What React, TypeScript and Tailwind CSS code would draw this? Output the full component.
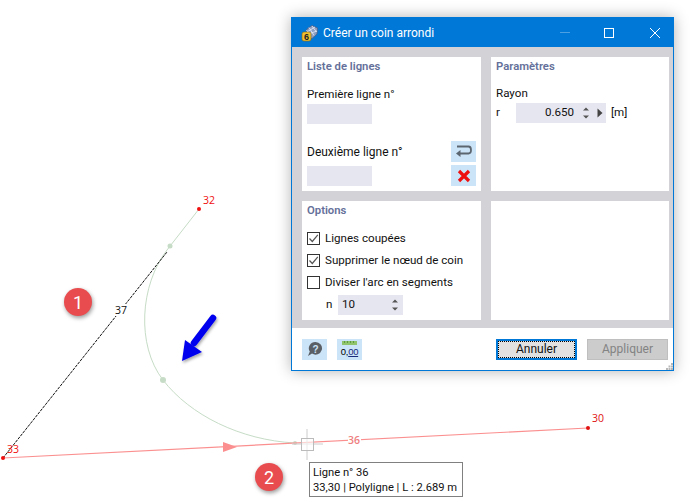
const font = "font-['Roboto','Liberation_Sans',sans-serif]"

function AppIcon() {
  return (
    <svg width="18" height="18" viewBox="0 0 18 18" className="shrink-0">
      <path d="M6 5 L11 1.5 L16.5 4 L16 10 L11 14.5 L5 11 Z" fill="#8c9fc4" stroke="#4f5f86" strokeWidth="0.8" />
      <path d="M8 3.5 L13 11.5 M11 2 L15.5 8 M6 8 L14 3 M6 10.5 L16 7 M5.5 6 L10 14" stroke="#e8ecf5" strokeWidth="0.8" />
      <rect x="1" y="8" width="9" height="9" rx="2" fill="#f0c030" stroke="#8a6a10" strokeWidth="0.6" />
      <text x="5.5" y="15.5" textAnchor="middle" fontSize="9" fontWeight="700" fill="#222" fontFamily="Liberation Sans">6</text>
    </svg>
  )
}

function Spinner() {
  return (
    <svg width="8" height="12" viewBox="0 0 8 12">
      <path d="M4 0.5 L7 3.5 H1 Z M4 11.5 L1 8.5 H7 Z" fill="#555" />
    </svg>
  )
}

function IconButton({ children }: { children: React.ReactNode }) {
  return <div className="w-[25px] h-[21px] bg-[#cce4f7] flex items-center justify-center">{children}</div>
}

function Panel({ title, children }: { title?: string; children?: React.ReactNode }) {
  return (
    <div className="bg-white pl-[5px] pr-[5px] flex flex-col">
      {title && <div className="h-[18px] leading-[20px] text-[11.3px] font-semibold text-[#65709a]">{title}</div>}
      {children}
    </div>
  )
}

function CheckRow({ label, checked }: { label: string; checked?: boolean }) {
  return (
    <div className="h-[22px] flex items-center gap-[5px] whitespace-nowrap">
      <div className="w-[13px] h-[13px] border border-[#333] bg-white flex items-center justify-center shrink-0">
        {checked && (
          <svg width="11" height="11" viewBox="0 0 11 11">
            <path d="M1.5 5.5 L4.3 8.5 L9.8 1.8" fill="none" stroke="#555" strokeWidth="1.2" />
          </svg>
        )}
      </div>
      <span className="pt-px">{label}</span>
    </div>
  )
}

function Drawing() {
  return (
    <svg width="692" height="502" className="absolute inset-0">
      <defs>
        <filter id="soft" x="-30%" y="-30%" width="170%" height="170%">
          <feDropShadow dx="1" dy="2" stdDeviation="1.5" floodColor="#000" floodOpacity="0.35" />
        </filter>
      </defs>
      <path d="M167 250 L199 209" stroke="#c6dcc6" strokeWidth="1" fill="none" />
      <path d="M167 250 C140 285 136 345 163 380 C190 415 240 440 295 443" stroke="#c6dcc6" strokeWidth="1" fill="none" />
      <circle cx="170" cy="246" r="2.5" fill="#c6dcc6" />
      <circle cx="163" cy="380" r="3" fill="#c6dcc6" />
      <circle cx="295" cy="443" r="2" fill="#c6dcc6" />
      <path d="M3 458 L167 252" stroke="#111" strokeWidth="1" strokeDasharray="3 1" fill="none" />
      <path d="M3 458 L588 428" stroke="#fb8f8f" strokeWidth="1.2" fill="none" />
      <path d="M223 442 L237 447 L223 452 Z" fill="#fb8f8f" />
      <circle cx="199" cy="209" r="2" fill="#f01010" />
      <circle cx="3" cy="458" r="2" fill="#f01010" />
      <circle cx="588" cy="428" r="2" fill="#e01010" />
      <path d="M307 429 V460 M292 444 H323" stroke="#ccc" strokeWidth="1" />
      <rect x="301.5" y="438.5" width="12" height="12" fill="white" fillOpacity="0.6" stroke="#bbb" strokeWidth="1" />
      <g className="font-['Open_Sans',sans-serif]" fontSize="10.5">
        <text x="203" y="204" fill="#f01010">32</text>
        <text x="7" y="453" fill="#f01010">33</text>
        <text x="592" y="422" fill="#e01010">30</text>
        <rect x="115" y="304" width="13" height="12" fill="white" />
        <text x="115" y="314" fill="#111">37</text>
        <rect x="348" y="434" width="13" height="12" fill="white" />
        <text x="348" y="444" fill="#ee8080" fontWeight="600">36</text>
      </g>
      <g filter="url(#soft)">
        <path d="M213 318 L194 343" stroke="#0000ee" strokeWidth="6.5" strokeLinecap="round" />
        <path d="M182 361 L185 340 L202 352 Z" fill="#0000ee" />
      </g>
    </svg>
  )
}

function Badge({ n, className }: { n: string; className: string }) {
  return (
    <div className={`absolute w-[28px] h-[28px] rounded-full bg-[#e84c4f] text-white text-[18px] flex items-center justify-center shadow-[1px_2px_4px_rgba(0,0,0,0.4)] ${className}`}>
      {n}
    </div>
  )
}

export default function App() {
  return (
    <div className={`relative w-[692px] h-[502px] bg-white overflow-hidden text-[11.6px] text-[#111] ${font}`}>
      <Drawing />
      <Badge n="1" className="left-[64px] top-[288px]" />
      <Badge n="2" className="left-[255px] top-[463px]" />

      {/* hover tooltip */}
      <div className="absolute left-[309px] top-[462px] w-[154px] h-[35px] border border-[#808080] bg-white pl-[3px] text-[11.2px] leading-[15px] flex flex-col justify-center whitespace-nowrap">
        <div>Ligne n° 36</div>
        <div>33,30 | Polyligne | L : 2.689 m</div>
      </div>

      {/* dialog window */}
      <div className="absolute left-[291px] top-[17px] w-[383px] h-[354px] border border-[#0078d7] bg-white flex flex-col shadow-[0_0_14px_rgba(0,0,0,0.3)]">
        <div className="h-[29px] bg-[#0078d7] text-white flex items-center pl-[9px] shrink-0">
          <AppIcon />
          <span className="ml-[4px] text-[12px]">Créer un coin arrondi</span>
          <div className="ml-auto flex items-center">
            <div className="w-[10px] h-px bg-[#4da1e3] mr-[34px]" />
            <div className="w-[10px] h-[10px] border border-white mr-[36px]" />
            <svg width="10" height="10" viewBox="0 0 10 10" className="mr-[13px]">
              <path d="M0 0 L10 10 M10 0 L0 10" stroke="white" strokeWidth="1" />
            </svg>
          </div>
        </div>

        <div className="bg-[#d3d3d7] pl-[10px] pr-[4px] pt-[10px] pb-[8px] grid grid-cols-[179px_178px] grid-rows-[134px_119px] gap-[10px]">
          <Panel title="Liste de lignes">
            <div className="h-[18px] leading-[20px] mt-[9px]">Première ligne n°</div>
            <div className="w-[65px] h-[20px] bg-[#e6e6f0] mt-[2px]" />
            <div className="flex justify-between mt-[17px]">
              <div className="pt-[2px]">
                <div className="h-[18px] leading-[18px] text-[12px]">Deuxième ligne n°</div>
                <div className="w-[65px] h-[20px] bg-[#e6e6f0] mt-[5px]" />
              </div>
              <div className="flex flex-col gap-[3px]">
                <IconButton>
                  <svg width="17" height="13" viewBox="0 0 17 13">
                    <path d="M2 1.5 H13.5 Q16 1.5 16 5 Q16 8.5 13.5 8.5 H5" fill="none" stroke="#5c6670" strokeWidth="1.8" />
                    <path d="M5.5 5 L1 8.5 L5.5 12 Z" fill="#5c6670" />
                  </svg>
                </IconButton>
                <IconButton>
                  <svg width="14" height="14" viewBox="0 0 14 14">
                    <path d="M2 2 L12 12 M12 2 L2 12" stroke="#ee1111" strokeWidth="3.2" />
                  </svg>
                </IconButton>
              </div>
            </div>
          </Panel>

          <Panel title="Paramètres">
            <div className="h-[18px] leading-[20px] mt-[8px]">Rayon</div>
            <div className="flex items-center mt-[2px]">
              <span className="w-[20px]">r</span>
              <div className="w-[90px] h-[20px] bg-[#e6e6f0] flex items-center justify-end">
                <span>0.650</span>
                <div className="ml-[8px] flex items-center"><Spinner /></div>
                <svg width="6" height="10" viewBox="0 0 6 10" className="ml-[7px] mr-[3px]">
                  <path d="M0.5 0.5 L5.5 5 L0.5 9.5 Z" fill="#444" />
                </svg>
              </div>
              <span className="ml-[5px]">[m]</span>
            </div>
          </Panel>

          <Panel title="Options">
            <div className="mt-[8px]">
              <CheckRow label="Lignes coupées" checked />
              <CheckRow label="Supprimer le nœud de coin" checked />
              <CheckRow label="Diviser l'arc en segments" />
            </div>
            <div className="flex items-center mt-[2px] pl-[19px]">
              <span className="w-[12px]">n</span>
              <div className="w-[65px] h-[20px] bg-[#e6e6f0] flex items-center justify-between pl-[4px] pr-[4px]">
                <span>10</span>
                <Spinner />
              </div>
            </div>
          </Panel>

          <Panel />
        </div>

        <div className="relative flex-1 flex items-center pl-[10px] pr-[5px]">
          <div className="flex gap-[10px]">
            <IconButton>
              <svg width="17" height="16" viewBox="0 0 17 16">
                <path d="M9.5 1 A6.5 6.3 0 1 1 6 12.6 L2 15 L3.8 10.6 A6.5 6.3 0 0 1 9.5 1 Z" fill="#5a5f66" />
                <text x="9.5" y="11.5" textAnchor="middle" fontSize="10" fontWeight="700" fill="#cce4f7" fontFamily="Liberation Sans">?</text>
              </svg>
            </IconButton>
            <IconButton>
              <div className="flex flex-col items-center leading-none">
                <svg width="15" height="4" viewBox="0 0 15 4" className="mb-[1px]">
                  <rect width="15" height="4" fill="#8fc46c" />
                  <path d="M2.5 0 V2 M5.5 0 V2 M8.5 0 V2 M11.5 0 V2" stroke="#5f9a40" strokeWidth="1" />
                </svg>
                <span className="text-[9.5px] leading-[11px] tracking-[-0.3px] font-['Liberation_Sans',sans-serif] text-black">
                  0,<span className="underline text-[#1a2a7a]">00</span>
                </span>
              </div>
            </IconButton>
          </div>
          <div className="ml-auto flex gap-[10px] text-[12px]">
            <div className="w-[81px] h-[21px] border-2 border-[#0078d7] bg-[#e1e1e1]">
              <div className="h-full border border-dotted border-black flex items-center justify-center">Annuler</div>
            </div>
            <div className="w-[81px] h-[21px] border border-[#bfbfbf] bg-[#cccccc] text-[#838383] flex items-center justify-center">Appliquer</div>
          </div>
          <svg width="7" height="7" viewBox="0 0 7 7" className="absolute right-0 bottom-0">
            <path d="M5 0h2v2H5z M2.5 2.5h2v2h-2z M5 2.5h2v2H5z M0 5h2v2H0z M2.5 5h2v2h-2z M5 5h2v2H5z" fill="#b8b8b8" />
          </svg>
        </div>
      </div>
    </div>
  )
}
